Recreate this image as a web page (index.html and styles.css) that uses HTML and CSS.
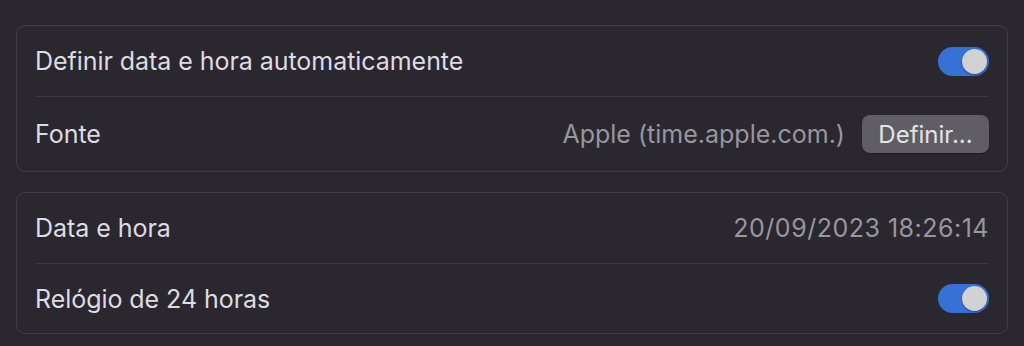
FILE: index.html
```html
<!DOCTYPE html>
<html lang="pt">
<head>
<meta charset="utf-8">
<link rel="stylesheet" href="styles.css">
</head>
<body>
<main class="page">
  <section class="card">
    <div class="row">
      <span class="label">Definir data e hora automaticamente</span>
      <span class="toggle on"><span class="knob"></span></span>
    </div>
    <div class="row row-btn">
      <span class="label">Fonte</span>
      <div class="right">
        <span class="value">Apple (time.apple.com.)</span>
        <button class="btn">Definir...</button>
      </div>
    </div>
  </section>
  <section class="card">
    <div class="row">
      <span class="label">Data e hora</span>
      <span class="value date">20/09/2023 18:26:14</span>
    </div>
    <div class="row">
      <span class="label">Relógio de 24 horas</span>
      <span class="toggle on"><span class="knob"></span></span>
    </div>
  </section>
</main>
</body>
</html>
```
FILE: styles.css
```css
* { box-sizing: border-box; }
html, body {
  margin: 0;
  background: #29262e;
  height: 100%;
}
body {
  font-family: Inter, "Noto Sans", "Liberation Sans", sans-serif;
  -webkit-font-smoothing: antialiased;
}
.page {
  padding: 25px 16px 0 16px;
  display: flex;
  flex-direction: column;
  gap: 20px;
}
.card {
  border: 1px solid #403d45;
  border-radius: 9px;
  background: #2a272f;
  padding: 0 18px;
}
.row {
  display: flex;
  align-items: center;
  justify-content: space-between;
  height: 70px;
}
.row + .row {
  border-top: 1px solid #3b3840;
}
.row-btn { height: 75px; }
.label {
  color: #dedce2;
  font-size: 25px;
  letter-spacing: -0.05px;
}
.value {
  color: #99969e;
  font-size: 25px;
}
.value.apple { letter-spacing: -0.1px; }
.date {
  letter-spacing: 0.5px;
}
.right {
  display: flex;
  align-items: center;
  gap: 17px;
}
.btn {
  font-family: inherit;
  font-size: 24px;
  color: #e4e3e6;
  background: #605d65;
  border: none;
  border-radius: 8px;
  height: 38px;
  width: 127px;
  padding: 0;
  box-shadow: 0 1px 1px rgba(0,0,0,0.3);
}
.toggle {
  width: 51px;
  height: 29px;
  border-radius: 15px;
  background: #3671d6;
  display: flex;
  align-items: center;
  justify-content: flex-end;
  padding: 2px;
}
.knob {
  width: 25px;
  height: 25px;
  border-radius: 50%;
  background: #d2d1d3;
  box-shadow: 0 1px 2px rgba(0,0,0,0.35);
}
```
